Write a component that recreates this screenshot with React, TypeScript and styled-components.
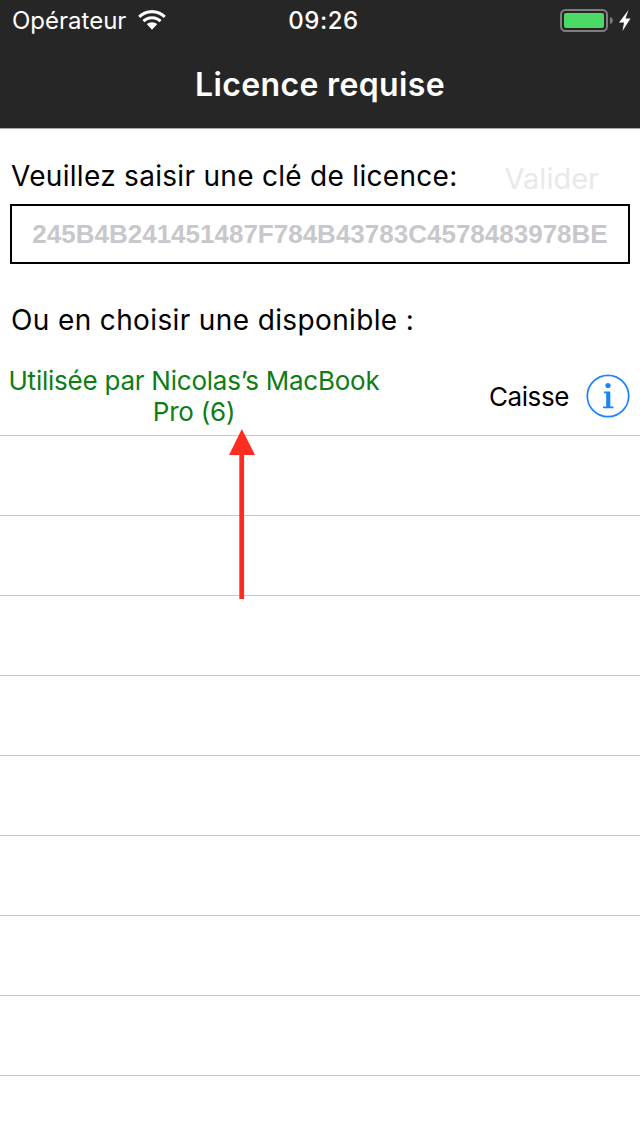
import React from "react";
import styled, { createGlobalStyle } from "styled-components";

const Global = createGlobalStyle`
  html, body { margin: 0; padding: 0; background: #fff; }
  body { font-family: Inter, "Liberation Sans", sans-serif; }
`;

const Page = styled.div`
  position: relative;
  width: 640px;
  height: 1136px;
  overflow: hidden;
  background: #fff;
  color: #000;
`;

const Header = styled.header`
  height: 128px;
  background: #262626;
  border-bottom: 1px solid #a9a9a9;
  color: #fff;
`;

const StatusBar = styled.div`
  height: 40px;
  display: grid;
  grid-template-columns: 1fr auto 1fr;
  align-items: center;
  padding: 0 8px 0 12px;
`;

const StatusLeft = styled.div`
  display: flex;
  align-items: center;
  gap: 12px;
  font-size: 24px;
`;

const StatusTime = styled.div`
  font-size: 24px;
  font-weight: 500;
  letter-spacing: 0.5px;
  margin-left: 3px;
`;

const StatusRight = styled.div`
  display: flex;
  justify-content: flex-end;
  align-items: center;
`;

const NavTitle = styled.h1`
  margin: 0;
  height: 88px;
  line-height: 90px;
  text-align: center;
  font-size: 32px;
  font-weight: 600;
  letter-spacing: 0.35px;
`;

const Form = styled.section`
  padding: 27px 10px 0 10px;
`;

const LabelRow = styled.div`
  display: flex;
  align-items: center;
  justify-content: space-between;
  height: 40px;
  padding-left: 1px;
`;

const Label = styled.label`
  font-size: 28px;
  line-height: 40px;
  letter-spacing: 0.3px;
`;

const ValidateButton = styled.span`
  font-size: 29px;
  color: #e9e9ea;
  margin-right: 31px;
  position: relative;
  top: 2px;
`;

const KeyInput = styled.div`
  box-sizing: border-box;
  height: 60px;
  margin-top: 8px;
  border: 2px solid #000;
  display: flex;
  align-items: center;
  justify-content: center;
  font-family: "Liberation Sans", Arial, sans-serif;
  font-weight: 700;
  font-size: 26px;
  color: #c8c7cc;
`;

const SectionLabel = styled.div`
  font-size: 28px;
  line-height: 40px;
  letter-spacing: 0.37px;
  margin: 36px 0 0 11px;
`;

const List = styled.div`
  margin-top: 16px;
`;

const Row = styled.div`
  box-sizing: border-box;
  height: 80px;
  border-bottom: 1px solid #c8c7cc;
  display: flex;
  align-items: center;
`;

const RowUser = styled.div`
  width: 388px;
  flex: none;
  text-align: center;
  color: #107c14;
  font-size: 26px;
  line-height: 31px;
  letter-spacing: -0.24px;
  margin-top: 1px;
`;

const RowName = styled.div`
  margin-left: auto;
  margin-top: 1px;
  font-size: 26px;
  letter-spacing: -0.4px;
`;

const InfoButton = styled.span`
  display: flex;
  margin: 0 10px 0 17px;
`;

const ArrowOverlay = styled.svg`
  position: absolute;
  left: 226px;
  top: 429px;
`;

const Wifi = () => (
  <svg width="28" height="20" viewBox="0 0 28 20" fill="#fff">
    <path d="M14 3.2c4.6 0 8.7 1.8 11.8 4.8l2-2.2C24.100 2.200 19.300 0 14 0S3.900 2.200.200 5.800l2 2.200C5.300 5 9.400 3.200 14 3.200z" />
    <path d="M14 9.300c2.900 0 5.500 1.100 7.500 2.900l2.100-2.200C21 7.600 17.700 6.200 14 6.200S7 7.600 4.400 10l2.100 2.200c2-1.800 4.600-2.900 7.500-2.900z" />
    <path d="M14 12.300c-2 0-3.700.7-5.100 1.900l5.100 5.600 5.100-5.600c-1.400-1.200-3.100-1.900-5.100-1.900z" />
  </svg>
);

const Battery = () => (
  <svg width="72" height="24" viewBox="0 0 72 24">
    <rect x="1" y="2" width="46" height="21" rx="4.500" fill="none" stroke="#7d7d7d" strokeWidth="2" />
    <rect x="4" y="5" width="40" height="15" rx="2" fill="#4cd964" />
    <path d="M50 9c1.800.4 2.800 1.800 2.800 3.500s-1 3.100-2.800 3.500z" fill="#7d7d7d" />
    <path d="M68.500 2 59 14.500h5l-1.500 8.500L70.500 10.500h-5z" fill="#fff" />
  </svg>
);

const InfoIcon = () => (
  <svg width="44" height="44" viewBox="0 0 44 44">
    <circle cx="22" cy="22" r="20.700" fill="none" stroke="#1a82fb" strokeWidth="1.700" />
    <circle cx="22" cy="11.500" r="2.600" fill="#1a82fb" />
    <path d="M18 17.500h6.300v15H27.500v1.800h-10.500v-1.800h3.200v-13.200H18z" fill="#1a82fb" />
  </svg>
);

const rows = Array.from({ length: 8 }, (_, i) => i);

export default function App() {
  return (
    <Page>
      <Global />
      <Header>
        <StatusBar>
          <StatusLeft>
            <span>Opérateur</span>
            <Wifi />
          </StatusLeft>
          <StatusTime>09:26</StatusTime>
          <StatusRight>
            <Battery />
          </StatusRight>
        </StatusBar>
        <NavTitle>Licence requise</NavTitle>
      </Header>
      <Form>
        <LabelRow>
          <Label>Veuillez saisir une clé de licence:</Label>
          <ValidateButton>Valider</ValidateButton>
        </LabelRow>
        <KeyInput>245B4B241451487F784B43783C4578483978BE</KeyInput>
      </Form>
      <SectionLabel>Ou en choisir une disponible :</SectionLabel>
      <List>
        <Row>
          <RowUser>Utilisée par Nicolas’s MacBook Pro (6)</RowUser>
          <RowName>Caisse</RowName>
          <InfoButton>
            <InfoIcon />
          </InfoButton>
        </Row>
        {rows.map((r) => (
          <Row key={r} />
        ))}
      </List>
      <ArrowOverlay width="30" height="170" viewBox="0 0 30 170">
        <path d="M15.800 0 29 26H3z" fill="#ff2d20" />
        <rect x="13.300" y="25" width="4.800" height="145" fill="#ff2d20" />
      </ArrowOverlay>
    </Page>
  );
}
